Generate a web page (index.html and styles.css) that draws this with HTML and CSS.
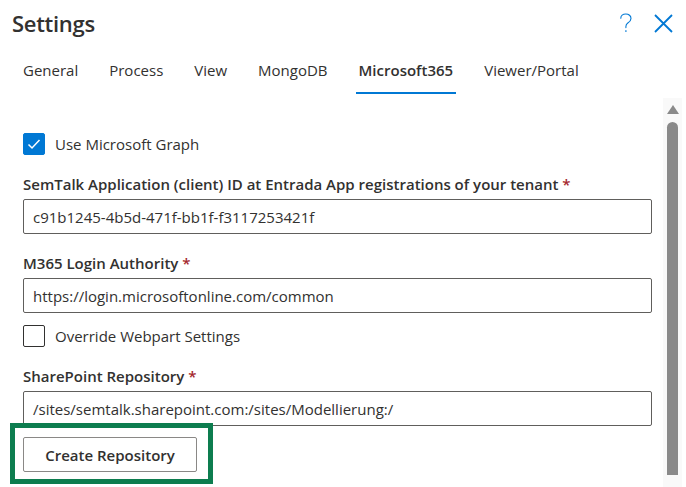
FILE: index.html
```html
<!DOCTYPE html>
<html lang="en">
<head>
<meta charset="utf-8">
<title>Settings</title>
<link rel="stylesheet" href="styles.css">
</head>
<body>
<div class="dialog">
  <header class="header">
    <h1 class="title">Settings</h1>
    <div class="actions">
      <button class="icon-btn" aria-label="Help">
        <svg width="14" height="20" viewBox="0 0 14 20"><path d="M1.8 5.2 C1.8 2.6 3.8 1 6.8 1 C9.8 1 12 2.8 12 5.4 C12 7.8 10.4 8.9 8.8 10 C7.4 11 6.9 11.8 6.9 13.4 V14.6" fill="none" stroke="#0078d4" stroke-width="1.1" stroke-linecap="round"/><circle cx="6.9" cy="18" r="0.85" fill="#0078d4"/></svg>
      </button>
      <button class="icon-btn" aria-label="Close">
        <svg width="19" height="19" viewBox="0 0 19 19"><path d="M1 1 L18 18 M18 1 L1 18" stroke="#0078d4" stroke-width="1.8" fill="none"/></svg>
      </button>
    </div>
  </header>
  <nav class="tabs">
    <span class="tab">General</span>
    <span class="tab">Process</span>
    <span class="tab">View</span>
    <span class="tab">MongoDB</span>
    <span class="tab active">Microsoft365</span>
    <span class="tab">Viewer/Portal</span>
  </nav>
  <div class="body">
    <div class="content">
      <label class="check-row first">
        <span class="box checked"><svg width="14" height="12" viewBox="0 0 14 12"><path d="M1.5 6.5 L5 10 L12.5 2" fill="none" stroke="#fff" stroke-width="1.5"/></svg></span>
        <span class="check-text">Use Microsoft Graph</span>
      </label>
      <div class="label">SemTalk Application (client) ID at Entrada App registrations of your tenant <span class="req">*</span></div>
      <div class="input">c91b1245-4b5d-471f-bb1f-f3117253421f</div>
      <div class="label">M365 Login Authority <span class="req">*</span></div>
      <div class="input">https://login.microsoftonline.com/common</div>
      <label class="check-row second">
        <span class="box"></span>
        <span class="check-text">Override Webpart Settings</span>
      </label>
      <div class="label">SharePoint Repository <span class="req">*</span></div>
      <div class="input">/sites/semtalk.sharepoint.com:/sites/Modellierung:/</div>
      <div class="highlight">
        <button class="btn">Create Repository</button>
      </div>
    </div>
    <div class="scrollbar">
      <div class="arrow"></div>
      <div class="thumb"></div>
    </div>
  </div>
</div>
</body>
</html>
```

FILE: styles.css
```css
* { box-sizing: border-box; }
html, body { margin: 0; padding: 0; background: #fff; }
body {
  font-family: "Open Sans", "Noto Sans", sans-serif;
  color: #323130;
  width: 686px;
  height: 487px;
  overflow: hidden;
}
.dialog { display: flex; flex-direction: column; height: 487px; }
.header {
  height: 48px;
  display: flex;
  align-items: center;
  justify-content: space-between;
  padding: 0 13px 0 12px;
}
.title {
  margin: 0;
  font-size: 22px;
  font-weight: 600;
  letter-spacing: -0.3px;
  line-height: 1;
  position: relative;
  top: -1px;
}
.actions { display: flex; align-items: center; gap: 21px; position: relative; top: -1px; }
.icon-btn {
  border: 0; background: none; padding: 0; margin: 0;
  display: flex; align-items: center; justify-content: center;
}
.tabs {
  display: flex;
  padding-left: 20px;
  height: 46px;
}
.tab {
  height: 46px;
  display: flex;
  align-items: center;
  padding: 0 3px;
  margin-right: 25px;
  font-size: 15px;
  border-bottom: 2px solid transparent;
  white-space: nowrap;
}
.tab.active {
  font-weight: 600;
  border-bottom-color: #0078d4;
}
.body { display: flex; flex: 1; min-height: 0; }
.content {
  flex: 1;
  padding: 39px 11px 0 23px;
  display: flex;
  flex-direction: column;
  align-items: stretch;
}
.check-row {
  display: flex;
  align-items: center;
  height: 22px;
  font-size: 15px;
}
.check-row.second { margin-top: 12px; }
.box {
  width: 22px; height: 22px;
  border: 1px solid #323130;
  border-radius: 2px;
  display: flex; align-items: center; justify-content: center;
  margin-right: 10px;
  flex: none;
}
.box.checked { background: #0078d4; border-color: #0078d4; }
.label {
  margin-top: 19px;
  height: 20px;
  line-height: 20px;
  font-size: 15px;
  font-weight: 600;
  white-space: nowrap;
}
.req { color: #a4262c; font-weight: 600; }
.input {
  margin-top: 5px;
  height: 35px;
  border: 1px solid #605e5c;
  border-radius: 2px;
  padding: 0 9px;
  display: flex;
  align-items: center;
  font-size: 15px;
  white-space: nowrap;
}
.highlight {
  align-self: flex-start;
  margin: -3px 0 0 -13px;
  border: 5px solid #0d7d4f;
  padding: 9px 11px 7px 8px;
}
.btn {
  display: block;
  width: 174px;
  height: 35px;
  border: 1px solid #8a8886;
  border-radius: 2px;
  background: #fff;
  color: #323130;
  font-family: inherit;
  font-size: 15px;
  font-weight: 600;
  padding: 0;
}
.scrollbar {
  width: 19px;
  margin: 4px 4px 0 0;
  background: #f9f9f9;
  display: flex;
  flex-direction: column;
  align-items: center;
}
.arrow {
  margin-top: 7px;
  width: 0; height: 0;
  border-left: 6px solid transparent;
  border-right: 6px solid transparent;
  border-bottom: 9px solid #8a8a8a;
}
.thumb {
  margin-top: 8px;
  width: 11px;
  height: 353px;
  background: #8a8a8a;
  border-radius: 6px 6px 0 0;
}
```
